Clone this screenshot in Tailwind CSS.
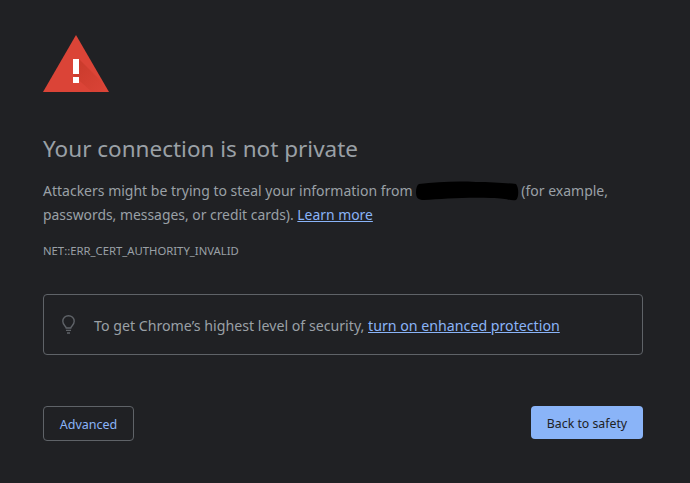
<!DOCTYPE html>
<html lang="en">
<head>
<meta charset="UTF-8">
<title>Privacy error</title>
<script src="https://cdn.jsdelivr.net/npm/@tailwindcss/browser@4"></script>
</head>
<body class="bg-[#202124] h-screen overflow-hidden font-['Noto_Sans',sans-serif] text-[#9aa0a6]">
  <div class="w-[600px] ml-[43px] pt-[35px]">
    <svg width="66" height="57" viewBox="0 0 66 57" class="block">
      <defs>
        <linearGradient id="shade" x1="0" y1="0" x2="1" y2="1">
          <stop offset="0" stop-color="#a52714" stop-opacity="0.35"/>
          <stop offset="1" stop-color="#a52714" stop-opacity="0"/>
        </linearGradient>
      </defs>
      <path d="M33 0 L66 57 H0 Z" fill="#db4437"/>
      <path d="M36 24 L57 45 L64 57 H49 L30 40 Z" fill="url(#shade)"/>
      <rect x="30" y="24" width="6" height="15" fill="#fff"/>
      <rect x="30" y="42" width="6" height="6" fill="#fff"/>
    </svg>
    <h1 class="mt-[40px] text-[22.5px] leading-[34px] font-normal text-[#9aa0a6]">Your connection is not private</h1>
    <p class="mt-[13px] text-[14px] leading-[24px]">
      Attackers might be trying to steal your information from
      <svg width="105" height="20" viewBox="0 0 105 20" class="inline-block align-middle -my-[4px] -mt-[6px]">
        <path d="M3 3 C20 1 40 0 60 1 C75 1 90 2 100 3 C103 7 103 16 100 19 C94 20 90 17 75 17 C50 16 25 18 8 19 C2 19 0 17 0 11 C0 7 1 4 3 3 Z" fill="#000"/>
      </svg>(for example,<br>
      <span class="text-[13.9px]">passwords, messages, or credit cards). <a class="text-[#8ab4f8] underline">Learn more</a></span>
    </p>
    <p class="mt-[16px] text-[11.3px] leading-[16px]">NET::ERR_CERT_AUTHORITY_INVALID</p>
    <div class="mt-[35px] h-[61px] pt-[2px] border border-[#5f6368] rounded-[4px] flex items-center pl-[18px] gap-[19px]">
      <svg width="13" height="19" viewBox="0 0 13 19" fill="none" stroke="#5f6368" stroke-width="1.4" class="shrink-0 -mt-[2px]">
        <path d="M4.2 13 C4 11.2 0.8 10 0.8 6.2 A5.7 5.5 0 0 1 12.2 6.2 C12.2 10 9 11.2 8.8 13 Z"/>
        <path d="M4 15.4 H9 M5 18 H8"/>
      </svg>
      <p class="text-[14.2px] leading-[24px]">To get Chrome’s highest level of security, <a class="text-[#8ab4f8] underline">turn on enhanced protection</a></p>
    </div>
    <div class="mt-[51px] flex justify-between items-start">
      <button class="w-[91px] h-[35px] pt-[3px] border border-[#5f6368] rounded-[4px] text-[12.5px] text-[#8ab4f8]">Advanced</button>
      <button class="w-[112px] h-[33px] pt-[3px] bg-[#8ab4f8] rounded-[4px] text-[12.3px] text-[#202124]">Back to safety</button>
    </div>
  </div>
</body>
</html>
